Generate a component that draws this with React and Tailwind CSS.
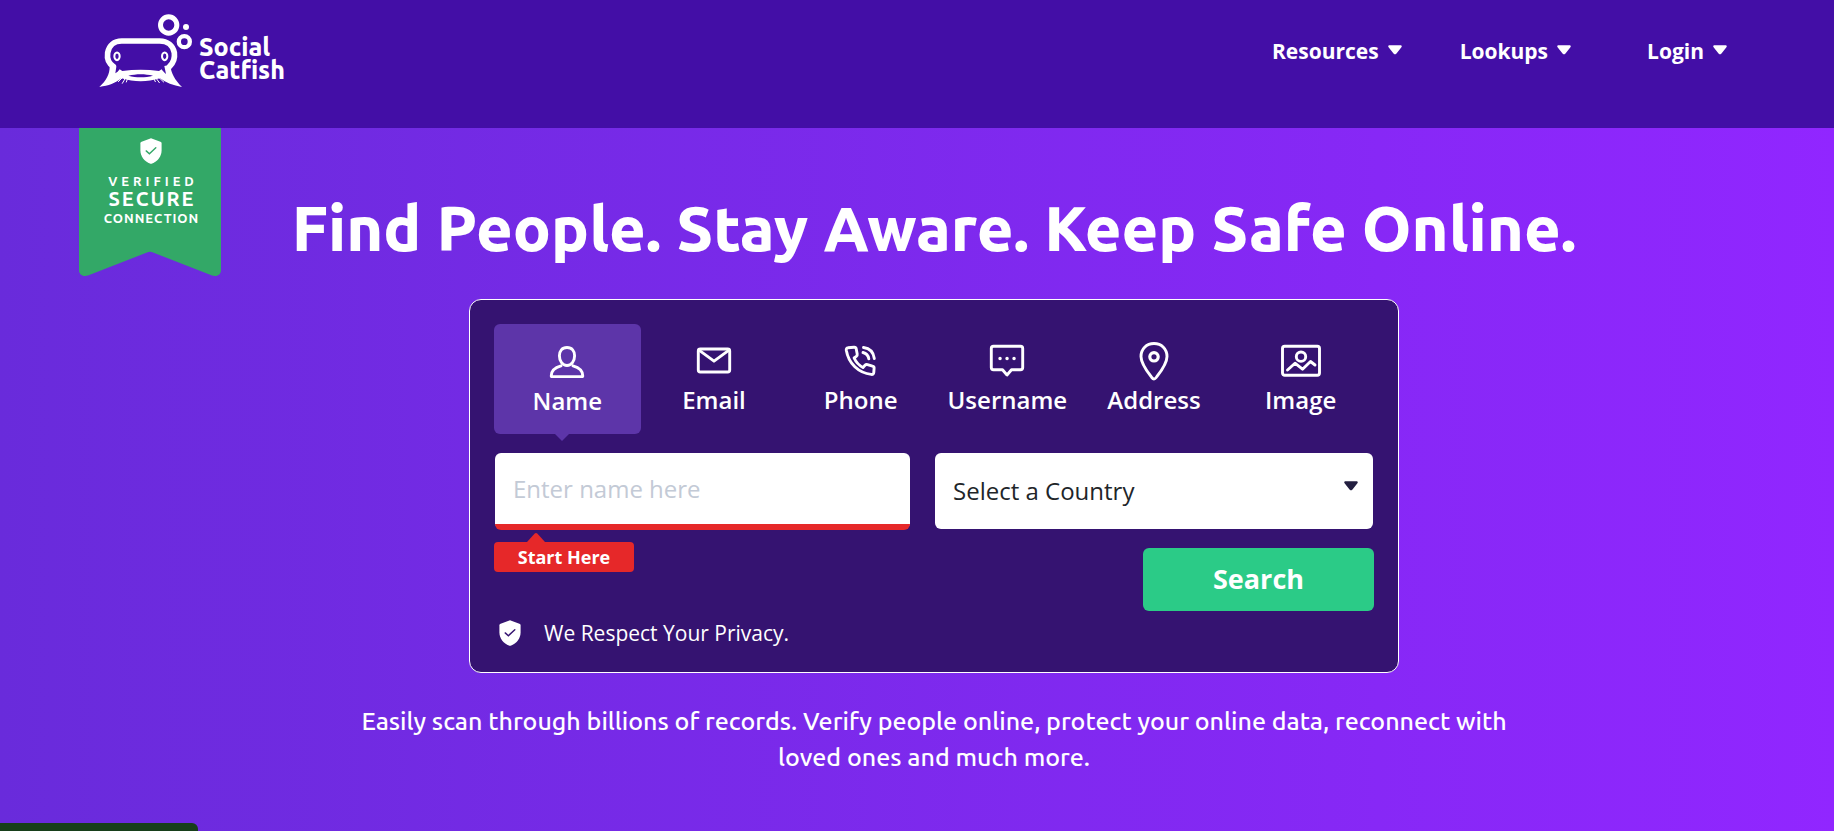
import React from "react";

const NAV = [
  { label: "Resources", space: "mr-[58px]" },
  { label: "Lookups", space: "mr-[76px]" },
  { label: "Login", space: "" },
];

function Caret({ className }) {
  return (
    <svg viewBox="0 0 14 10" className={className} fill="currentColor" aria-hidden="true">
      <path d="M1.6 0.2h10.8c1.3 0 1.8 1.1 1 2L8.5 8.6c-.9 1.1-2.1 1.1-3 0L.6 2.2c-.8-.9-.3-2 1-2z" />
    </svg>
  );
}

function Shield({ className, check }) {
  return (
    <svg viewBox="0 0 22 26" className={className} aria-hidden="true">
      <path
        d="M11 0.3l9.4 3.5c.8.3 1.2.8 1.2 1.6v6.8c0 6.2-3.8 11-9.4 13.3-.8.3-1.600.3-2.400 0C4.200 23.200.4 18.400.4 12.200V5.400c0-.8.4-1.300 1.200-1.600z"
        fill="#fff"
      />
      <path d="M6.200 12.900l3.200 2.800 6.400-6" fill="none" stroke={check} strokeWidth="1.400" strokeLinecap="round" />
    </svg>
  );
}

function Logo() {
  return (
    <a href="#" className="flex items-start text-white" aria-label="Social Catfish">
      <svg viewBox="80 35 291 231" className="mt-3 h-[77px] w-[97px]" fill="none" stroke="#fff" aria-hidden="true">
        <circle cx="295" cy="74" r="24.500" strokeWidth="15" />
        <circle cx="342" cy="124" r="16.500" strokeWidth="13" />
        <circle cx="347" cy="80" r="9" fill="#fff" stroke="none" />
        <path
          d="M129 198C112 188 110 172 112 157c4-22 20-35 42-35h114c23 0 40 14 44 35 2 16-2 30-14 41"
          strokeWidth="17"
          strokeLinecap="round"
        />
        <ellipse cx="140" cy="168" rx="8" ry="11.500" strokeWidth="6" />
        <ellipse cx="283" cy="168" rx="8" ry="11.500" strokeWidth="6" />
        <path
          d="M118 193l20 6-3 20c5-2 9-6 13-12l8 5c36-5 74-5 110 0l8-5c4 6 8 10 13 14l-5-24 18-4c2 26 14 46 35 67-27-4-48-13-66-26-40 12-76 12-116 0-18 15-38 22-66 26 21-20 31-38 31-61z"
          fill="#fff"
          stroke="none"
        />
        <path d="M174 226c24-6 50-6 74 0-24 6-50 6-74 0z" fill="#430ea6" stroke="none" />
        <path
          d="M160 228l-16 16M166 232l-10 17M172 234l-4 11M262 228l18 17M256 232l11 15M250 234l5 10"
          strokeWidth="3"
          strokeLinecap="round"
        />
      </svg>
      <span className="mt-9 ml-[5px] flex flex-col font-['Ubuntu','Noto_Sans',sans-serif] text-[25px] leading-[23px] font-black">
        <span>Social</span>
        <span>Catfish</span>
      </span>
    </a>
  );
}

function Badge() {
  return (
    <div className="absolute top-0 left-[79px] h-[148px] w-[142px] text-white">
      <svg viewBox="0 0 142 148" className="absolute inset-0 h-full w-full" aria-hidden="true">
        <path
          d="M0 0h142v142c0 5-4 7-9 5.500L74 124.500c-2-1-4-1-6 0L9 147.500C4 149 0 147 0 142z"
          fill="#33a867"
        />
      </svg>
      <div className="relative flex flex-col items-center pt-[10px] pl-0.5 font-['Ubuntu','Lato',sans-serif] font-semibold">
        <Shield className="h-[26px] w-[22px]" check="#33a867" />
        <span className="mt-[9px] pl-[4px] text-[13px] leading-4 tracking-[4px]">VERIFIED</span>
        <span className="pl-[2px] text-xl leading-5 tracking-[2px]">SECURE</span>
        <span className="pl-px text-[13px] leading-[18px] tracking-[1px]">CONNECTION</span>
      </div>
    </div>
  );
}

const ICONS = {
  Name: (
    <>
      <path d="M20 4.500c-5 0-7.600 3.500-7.600 8.300 0 5.500 3.200 9.700 7.600 9.700s7.600-4.200 7.600-9.700c0-4.800-2.600-8.300-7.600-8.300z" />
      <path d="M14 22.800c-5.800 1.600-9.700 5-9.700 9.800v1h31.400v-1c0-4.800-3.900-8.200-9.700-9.800" />
    </>
  ),
  Email: (
    <>
      <rect x="4.300" y="7" width="31.400" height="23" rx="2" />
      <path d="M5 8.200l15 11 15-11" />
    </>
  ),
  Phone: (
    <>
      <path d="M7 5.800l6-.6c1.300-.1 2 .5 2.200 1.600l1 5.200c.2 1-.1 1.700-.9 2.300l-2.200 1.700c2 4.400 4.800 7.300 8.900 9.500l2-2.200c.7-.8 1.500-1 2.500-.7l5 1.500c1.100.3 1.700 1 1.600 2.100l-.3 4.200c-.1 1.500-1 2.200-2.500 2C17.500 31 7.500 21.500 5.300 8.300 5.100 6.800 5.700 5.900 7 5.800z" />
      <path d="M22 10.500c3.300.8 5.200 2.800 5.800 6.200M22.500 5.500c6.200.8 10 4.600 10.800 11" />
    </>
  ),
  Username: (
    <>
      <path d="M6.500 4.300h27c1.400 0 2.200.8 2.200 2.200v19c0 1.400-.8 2.200-2.200 2.200h-9L20 33l-4.500-5.300h-9c-1.400 0-2.200-.8-2.200-2.200v-19c0-1.400.8-2.200 2.200-2.200z" />
      <path d="M13 16.500h.1M20 16.500h.1M27 16.500h.1" strokeWidth="3.400" />
    </>
  ),
  Address: (
    <>
      <path d="M20 1.500c-7.600 0-13 5.500-13 12.900 0 7.500 7 16.100 10.800 21.100 1.500 2 2.900 2 4.400 0C26 30.500 33 21.900 33 14.400 33 7 27.600 1.500 20 1.500z" />
      <circle cx="20" cy="14.800" r="4.200" strokeWidth="3.200" />
    </>
  ),
  Image: (
    <>
      <rect x="1.500" y="4.300" width="37" height="29" rx="2.200" />
      <circle cx="20" cy="14.700" r="4.700" />
      <path d="M6.500 28l7.500-6.800 7.500 6 8-7.700 4.500 3.500" />
    </>
  ),
};

function Tab({ label, active }) {
  return (
    <button
      type="button"
      role="tab"
      aria-selected={active}
      className={
        active
          ? "relative flex h-[110px] flex-1 basis-0 flex-col items-center rounded-md bg-[#5d35a9] pt-[19px] text-white"
          : "relative flex h-[110px] flex-1 basis-0 flex-col items-center pt-[18px] text-white"
      }
    >
      <svg
        viewBox="0 0 40 40"
        className="h-10 w-10"
        fill="none"
        stroke="#fff"
        strokeWidth="2.900"
        strokeLinecap="round"
        strokeLinejoin="round"
        aria-hidden="true"
      >
        {ICONS[label]}
      </svg>
      <span className="mt-0.5 text-2xl leading-8 font-semibold">{label}</span>
      {active && (
        <svg viewBox="0 0 14 7" className="absolute top-full left-[61px] h-[7px] w-[14px]" aria-hidden="true">
          <path d="M0 0h14L7 7z" fill="#5d35a9" />
        </svg>
      )}
    </button>
  );
}

function SearchCard() {
  return (
    <form
      onSubmit={(e) => e.preventDefault()}
      className="mx-auto mt-[35px] w-full max-w-[930px] rounded-xl border border-white bg-[#351371] px-6 pt-6 pb-[23px]"
    >
      <div role="tablist" className="flex">
        {Object.keys(ICONS).map((label) => (
          <Tab key={label} label={label} active={label === "Name"} />
        ))}
      </div>

      <div className="mt-[19px] grid grid-cols-[415fr_438fr] items-start gap-[25px] px-px">
        <input
          type="text"
          aria-label="Name"
          placeholder="Enter name here"
          className="h-[77px] w-full min-w-0 rounded-md border-b-[6px] border-[#e62829] bg-white px-[18px] text-2xl text-gray-900 outline-none placeholder:text-[#c3cad6]"
        />
        <div className="relative min-w-0">
          <select
            aria-label="Country"
            className="block h-[76px] w-full appearance-none rounded-md bg-white px-[18px] text-2xl text-[#212529] outline-none"
          >
            <option>Select a Country</option>
          </select>
          <Caret className="pointer-events-none absolute top-7 right-[15px] h-[10px] w-[14px] text-[#231f40]" />
        </div>
      </div>

      <div className="flex items-start justify-between">
        <div className="relative mt-3 flex h-[30px] w-[140px] items-center justify-center rounded bg-[#e62829] text-lg font-bold text-white">
          <svg viewBox="0 0 18 9" className="absolute bottom-full left-[33px] h-[9px] w-[18px]" aria-hidden="true">
            <path d="M0 9L7.500.8c1-1 2-1 3 0L18 9z" fill="#e62829" />
          </svg>
          Start Here
        </div>
        <button
          type="submit"
          className="mt-[18px] h-[63px] w-[231px] rounded-md bg-[#2bcb87] text-[27px] font-bold text-white"
        >
          Search
        </button>
      </div>

      <div className="mt-[6px] flex items-center gap-[23px] pl-[5px] text-white">
        <Shield className="h-[26px] w-[22px]" check="#351371" />
        <span className="text-[21px] leading-8">We Respect Your Privacy.</span>
      </div>
    </form>
  );
}

export default function App() {
  return (
    <div className="flex min-h-screen flex-col overflow-x-hidden bg-[#430ea6] font-['Open_Sans',sans-serif]">
      <header className="flex h-32 items-start justify-between pr-[107px] pl-[97px]">
        <Logo />
        <nav className="mt-9 flex items-center">
          {NAV.map(({ label, space }) => (
            <button
              key={label}
              type="button"
              className={`flex items-center gap-[9px] text-[21px] leading-[30px] font-bold text-white ${space}`}
            >
              {label}
              <Caret className="mb-0.5 h-[10px] w-[14px]" />
            </button>
          ))}
        </nav>
      </header>

      <main className="relative flex-1 bg-linear-to-r from-[#692bdb] to-[#9126ff] pl-[34px] text-white">
        <Badge />
        <h1 className="pt-16 text-center font-['Ubuntu','Noto_Sans',sans-serif] text-[63px] leading-[72px] font-black">
          Find People. Stay Aware. Keep Safe Online.
        </h1>
        <SearchCard />
        <p className="mx-auto mt-[30px] max-w-[1190px] text-center font-['Ubuntu','Noto_Sans',sans-serif] text-[25px] leading-9 font-medium">
          Easily scan through billions of records. Verify people online, protect your online data, reconnect with loved
          ones and much more.
        </p>
        <div className="absolute bottom-0 left-0 h-2 w-[198px] rounded-tr-md bg-[#173f1a]" />
      </main>
    </div>
  );
}
